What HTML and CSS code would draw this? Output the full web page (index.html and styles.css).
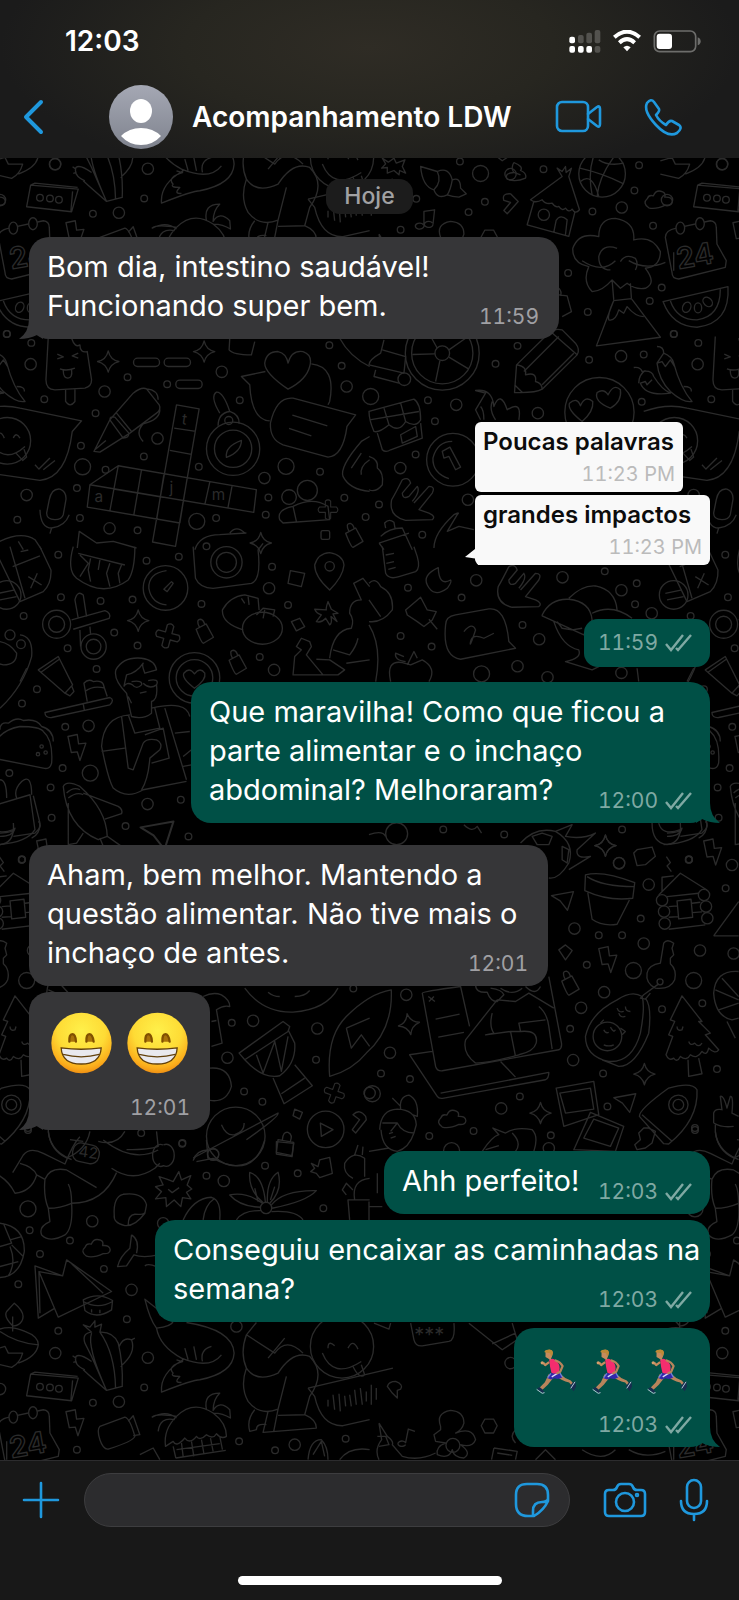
FILE: index.html
```
<!DOCTYPE html>
<html lang="pt-BR">
<head>
    <meta charset="UTF-8">
    <meta name="viewport" content="width=device-width, initial-scale=1.0">
    <title>Acompanhamento LDW</title>
    <link rel="stylesheet" href="styles.css">
</head>
<body>
    <!-- shared icons -->
    <svg class="defs" aria-hidden="true">
        <defs>
            <radialGradient id="faceFill" cx="50%" cy="30%" r="72%">
                <stop offset="0" stop-color="#fff04a"/>
                <stop offset="0.55" stop-color="#fedb35"/>
                <stop offset="0.85" stop-color="#fbae1c"/>
                <stop offset="1" stop-color="#ee8b12"/>
            </radialGradient>
            <linearGradient id="avatarFill" x1="0" y1="0" x2="0" y2="1">
                <stop offset="0" stop-color="#a5a8b4"/>
                <stop offset="1" stop-color="#7f838e"/>
            </linearGradient>
        </defs>
        <symbol id="ticks" viewBox="0 0 27 18">
            <path d="M1 10l5 6L18 1M11 14l2 2L26 1" fill="none" stroke="currentColor" stroke-width="2.4"/>
        </symbol>
        <symbol id="grin" viewBox="0 0 186 186">
            <circle cx="93" cy="93" r="92" fill="url(#faceFill)"/>
            <path d="M56 89Q55 66 65 66T76 89M108 89Q107 66 117 66T130 89" fill="#a9720a" stroke="#815000" stroke-width="7" stroke-linecap="round"/>
            <path d="M31 108Q92 116 153 108Q150 157 92 157T31 108Z" fill="#e9e9ee" stroke="#62400c" stroke-width="4"/>
            <path d="M37 128Q92 143 147 128" fill="none" stroke="#62400c" stroke-width="4"/>
        </symbol>
        <symbol id="runner" viewBox="0 0 124 136">
            <path d="M38 78Q32 93 27 102L10 120L18 127L36 110Q47 96 54 88Z" fill="#b8845b"/>
            <path d="M61 84Q78 98 101 103L107 111L114 106L106 97Q88 91 78 80Z" fill="#b8845b"/>
            <path d="M46 75L72 73L80 88Q67 95 57 90L46 94L34 89Z" fill="#3328aa"/>
            <path d="M45 75L36 88M73 74L80 86" stroke="#6d83dc" stroke-width="4"/>
            <path d="M48 86L64 76" stroke="#d9d9f4" stroke-width="4"/>
            <path d="M40 34Q52 26 60 36Q72 44 72 60L70 74Q58 78 47 73L43 56Z" fill="#f52d6e"/>
            <path d="M40 41L28 50L22 43" fill="none" stroke="#c58b5d" stroke-width="7" stroke-linejoin="round"/>
            <circle cx="19" cy="43" r="5" fill="#d69d6b"/>
            <path d="M60 36Q74 40 81 53L74 70L65 75" fill="none" stroke="#b8845b" stroke-width="7" stroke-linecap="round" stroke-linejoin="round"/>
            <path d="M29 8Q39 0 48 6Q54 15 48 25L44 35L37 30L29 25Z" fill="#c58b5d"/>
            <path d="M26 11Q25 3 36 3Q50 0 52 10Q52 18 46 24L43 14Z" fill="#bd8a37"/>
            <path d="M3 121L11 117L19 124L26 133L19 134Z" fill="#182d50"/>
            <path d="M103 115L112 103L120 100L122 115L115 130Z" fill="#182d50"/>
            <path d="M2 124L19 136L26 134M106 121L119 101" fill="none" stroke="#b5cbd5" stroke-width="3"/>
        </symbol>
    </svg>

    <div class="phone">
        <header class="top">
            <div class="status">
                <span class="clock">12:03</span>
                <svg class="signal" width="32" height="23" viewBox="0 0 96 69" aria-label="Sinal">
                    <g fill="#fff">
                        <rect x="1" y="20" width="17" height="20" rx="6"/>
                        <rect x="1" y="48" width="17" height="20" rx="6"/>
                        <rect x="27" y="48" width="17" height="20" rx="6"/>
                        <rect x="52" y="48" width="17" height="20" rx="6"/>
                    </g>
                    <g fill="#53524e">
                        <rect x="27" y="15" width="17" height="25" rx="6"/>
                        <rect x="52" y="8" width="17" height="32" rx="6"/>
                        <rect x="77" y="0" width="17" height="40" rx="6"/>
                        <rect x="77" y="48" width="17" height="20" rx="6"/>
                    </g>
                </svg>
                <svg class="wifi" width="28" height="22" viewBox="0 0 84 66" aria-label="Wi-Fi">
                    <path d="M4 22Q42-12 80 22M19 38Q42 17 65 38" fill="none" stroke="#fff" stroke-width="12"/>
                    <path d="M31 52Q42 42 53 52L42 64Z" fill="#fff"/>
                </svg>
                <svg class="battery" width="48" height="23" viewBox="0 0 144 69" aria-label="Bateria">
                    <rect x="4" y="3" width="124" height="62" rx="16" fill="none" stroke="#6d6d6b" stroke-width="5"/>
                    <rect x="11" y="11" width="46" height="46" rx="9" fill="#fff"/>
                    <path d="M134 22Q143 25 143 34T134 46Z" fill="#6d6d6b"/>
                </svg>
            </div>
            <div class="bar">
                <button class="icon back" type="button" aria-label="Voltar">
                    <svg width="22" height="36" viewBox="0 0 22 36"><path d="M19 3L4 18L19 33" stroke-width="4"/></svg>
                </button>
                <svg class="avatar" width="64" height="64" viewBox="0 0 64 64" aria-hidden="true">
                    <circle cx="32" cy="32" r="32" fill="url(#avatarFill)"/>
                    <ellipse cx="32" cy="26" rx="11" ry="12" fill="#fff"/>
                    <path d="M12 51Q20 43 32 43T52 51Q44 60 32 60T12 51Z" fill="#fff"/>
                </svg>
                <h1>Acompanhamento LDW</h1>
                <button class="icon video" type="button" aria-label="Chamada de vídeo">
                    <svg width="46" height="32" viewBox="0 0 46 32"><rect x="1" y="1" width="31" height="29" rx="5"/><path d="M32 13L41 6Q44 4 44 8V23Q44 27 41 25L32 18"/></svg>
                </button>
                <button class="icon call" type="button" aria-label="Ligar">
                    <svg width="38" height="38" viewBox="0 0 38 38"><path d="M3 5Q7 0 10 4L15 11Q16 13 12 17Q15 23 22 27Q25 22 28 23L35 27Q39 30 33 35Q24 40 12 27Q-1 13 3 5Z"/></svg>
                </button>
            </div>
        </header>

        <main class="chat">
            <svg class="wallpaper" aria-hidden="true">
                <defs>
                    <marker id="s" markerUnits="userSpaceOnUse" markerWidth="30" markerHeight="30" refX="15" refY="15"><circle cx="15" cy="15" r="10"/></marker>
                    <marker id="m" markerUnits="userSpaceOnUse" markerWidth="44" markerHeight="44" refX="22" refY="22"><circle cx="22" cy="22" r="17"/></marker>
                    <marker id="l" markerUnits="userSpaceOnUse" markerWidth="56" markerHeight="56" refX="28" refY="28"><circle cx="28" cy="28" r="24"/></marker>
                    <path id="spark" d="M0-32Q6-5 32 0Q6 6 0 32Q-6 6-32 0Q-6-5 0-32Z"/>
                    <path id="bolt" d="M-28-32L0-38L4-10L26-12L8 40L0 14L-18 16Z"/>
                    <path id="cloud" d="M-30 24Q-50 10-34-4Q-30-16-16-12Q-8-32 12-24Q22-20 18-8Q40-10 41 5Q40 18 20 16Q-10 30-30 24Z"/>
                    <path id="cross" d="M-10-10V-32Q0-42 10-32V-10H32Q42 0 32 10H10V32Q0 42-10 32V10H-32Q-42 0-32-10Z"/>
                    <path id="tag" d="M-24-14L6-30L28 10L-2 28Q-8 28-24-14ZM-14-20Q-26-44-10-44Q-2-42 2-28"/>
                    <path id="hand" d="M-30-60Q-50-20-62 0Q-72 50-20 62L60 60Q72 50 50 40L20 30L60-20Q70-40 50-40L5 10M-30-60Q-10-70-5-50L-30-20Q-30 0-10-10L15-40Q25-25 0 5"/>
                    <path id="paper" d="M-32-8L34-20L16 36L-6 8Z"/>

                    <!-- drawn in thirds of a pixel, one group per part of the wallpaper -->
                    <g id="tile">
                        <g transform="translate(369 0) scale(.333)">
                            <path d="M40 475L58 487L75 475L82 490L108 480L100 500L110 520L92 512L90 525L75 512L55 520L55 503L38 505L50 492Z"/>
                            <path d="M155 500L205 515Q240 500 250 540Q275 530 275 565L292 582L270 592Q250 590 235 585Q205 600 195 570Q160 560 155 500ZM205 515Q220 545 195 570M250 540Q245 570 235 585"/>
                            <path d="M165 680L165 635L197 630L192 675M165 680a13 9 0 1 1-2-6M192 675a13 9 0 1 1-2-6"/>
                            <path d="M405 602Q398 580 425 582L448 605L415 642L405 632L425 608Z"/>
                            <path d="M435 488Q465 500 455 512Q475 520 470 535Q440 548 415 538Q405 520 435 518L455 525M435 518Q425 505 435 488"/>
                            <path d="M485 600L580 530L565 505L580 515L590 500L592 518L608 505L600 530L632 630Q620 645 610 628Q600 640 590 625Q580 635 570 620Q560 625 550 610Q530 615 520 600Q500 612 485 600ZM495 605L475 675L600 710L618 638M555 697L562 662Q575 642 595 660L590 705"/>
                            <circle cx="700" cy="522" r="70"/>
                            <path d="M633 505Q700 520 765 552M680 456Q655 510 670 585M740 465Q690 530 685 590M635 545Q670 515 690 590M690 480Q720 500 765 490"/>
                            <use href="#cloud" x="870" y="600"/>
                            <polyline class="s" points="273,485 524,508 142,597 348,606 299,637 95,690 797,572 811,496 671,635 853,678"/>
                            <polyline class="m" points="759,623 525,645 1060,493"/>
                            <polyline class="l" points="335,521"/>
                        </g>
                        <g transform="translate(0 220) scale(.333)">
                            <use href="#spark" x="325" y="425"/><use href="#spark" x="613" y="395"/><use href="#spark" x="783" y="970"/>
                            <rect x="401" y="415" width="78" height="25" rx="12"/><rect x="493" y="415" width="79" height="25" rx="12"/><rect x="528" y="481" width="79" height="25" rx="12"/>
                            <path d="M145 350L138 480Q138 510 165 510L255 505Q275 500 275 480L262 395Q240 400 240 375Q225 385 215 355M197 508L197 545Q210 565 225 545L225 508M172 403L190 411L172 417M235 400L217 408L235 415M180 447Q200 455 225 445M190 452Q190 475 204 475T215 450"/>
                            <path d="M282 695L330 600L400 520Q425 500 440 507L478 555Q485 570 470 580L390 640L300 697ZM330 600Q330 588 345 592L387 640Q388 655 370 655ZM350 580L395 635M285 690L318 662M440 507Q475 510 475 540M480 570Q480 600 430 612Q405 640 430 665"/>
                            <path d="M530 555L598 567L527 980L458 967ZM523 625L588 635M510 692L575 704M270 795L762 878L770 810L355 738ZM355 738L330 873M425 750L402 885M492 765L470 902M562 775L540 910M630 787L615 855M697 798L684 867M270 795L262 862L540 910M342 808L490 833"/>
                            <text x="544" y="612" transform="rotate(8 540 612)">t</text><text x="509" y="820">j</text><text x="284" y="848">a</text><text x="636" y="842">m</text>
                            <circle cx="700" cy="687" r="80"/><circle cx="700" cy="687" r="56"/><circle cx="687" cy="602" r="12"/>
                            <path d="M680 713Q675 680 725 662Q725 695 680 713ZM655 618Q655 580 690 575Q720 585 718 612M660 580Q630 530 650 517Q670 515 690 575"/>
                            <path d="M865 508Q795 460 795 430Q800 395 835 395Q860 400 865 430Q875 390 910 395Q940 405 930 440Q920 480 865 508ZM935 432Q1010 440 990 545L985 555M797 455L725 470L750 495Q755 600 810 603"/>
                            <path d="M880 535L1068 585L1042 620Q1030 710 985 712L850 675Q810 660 812 610Q830 530 880 535ZM878 586L983 618M868 626L935 648"/>
                            <path d="M-70 575Q0 550 60 565L245 603L217 635Q200 775 120 782L-100 750M105 735L117 748L150 715M130 750L165 722"/>
                            <circle cx="22" cy="663" r="70"/>
                            <path d="M-10 655Q0 625 13 655M40 655Q48 635 60 655M-20 680Q20 730 75 680M48 700L68 722L80 712L72 688"/>
                            <path d="M148 840Q155 805 180 808Q200 815 198 840L190 885Q185 900 165 900Q140 900 140 880ZM120 870Q122 925 155 925Q195 920 208 885M155 925L150 942"/>
                            <circle cx="923" cy="812" r="30"/><circle cx="868" cy="832" r="22"/>
                            <path d="M840 900Q830 870 880 860Q940 830 985 860L990 900L850 910ZM880 860L890 905"/>
                            <use href="#cross" transform="translate(985 870) scale(.8)"/><use href="#tag" x="1062" y="955"/>
                            <path d="M1110 650L1085 665Q1020 740 1030 770Q1050 810 1110 815M1055 745L1085 700M1110 720Q1080 740 1085 765"/>
                            <rect x="964" y="933" width="26" height="26" rx="5"/>
                            <path d="M690 355L688 390Q700 405 755 405L765 365M1020 355Q1050 410 1110 440"/>
                            <path d="M232 985L238 935L290 970L340 965L410 985M-20 975Q60 930 105 960L125 990M55 965L70 990M585 990Q600 945 660 945L740 940M690 940Q710 915 735 940"/>
                            <polyline class="s" points="20,342 94,369 383,472 502,493 133,538 287,580 243,678 317,750 432,710 720,541 597,741 231,805 240,895 413,932 52,900 989,376 1026,438 961,756 806,833 798,885 649,895 1034,834 1098,892 620,980"/>
                            <polyline class="m" points="92,433 314,515 473,656 666,456 1041,500 794,775 80,826 329,926"/>
                            <polyline class="l" points="248,741 859,740 591,905"/>
                        </g>
                        <g transform="translate(369 220) scale(.333)">
                            <path d="M730 180Q700 215 670 215Q640 185 660 140Q610 130 612 85Q630 35 690 50Q690-5 740-5Q800 5 795 60Q850 45 875 95Q875 140 830 145Q865 190 830 205Q800 210 775 190L755 205ZM735 240L730 180M788 235L785 190M745 85Q700 70 690 110Q690 150 725 150M755 125Q770 100 800 115Q810 130 800 150"/>
                            <path d="M735 242L788 236L875 352L683 378ZM735 242Q715 285 720 300Q740 305 750 270L765 280L775 260Q800 290 825 290"/>
                            <path d="M883 245L1078 200Q1085 310 985 322Q910 320 883 245ZM905 243Q925 300 985 300Q1055 290 1055 208"/>
                            <ellipse cx="954" cy="262" rx="12" ry="16" transform="rotate(25 954 262)"/><ellipse cx="988" cy="264" rx="11" ry="15"/><ellipse cx="1017" cy="246" rx="12" ry="16" transform="rotate(-45 1017 246)"/>
                            <path d="M570 225L595 228L608 275L580 290M570 205Q580 215 575 228"/>
                            <path d="M437 518L443 435L545 335Q560 325 580 330L620 370Q635 390 625 405L520 508Q500 520 437 518ZM445 435Q475 440 470 465Q505 455 500 485Q520 490 520 508M465 455L570 350M520 495L615 400M545 335L625 405M437 495L460 517"/>
                            <circle cx="220" cy="400" r="111"/><circle cx="220" cy="400" r="92"/><circle cx="220" cy="400" r="22"/>
                            <path d="M198 402L130 404M240 390L290 355M240 412L300 448M213 422L200 485M205 385L180 340"/>
                            <path d="M45 360L35 400Q0 420 0 435L105 460L110 410L40 390M20 450L15 470L90 490"/><circle cx="106" cy="478" r="19"/>
                            <path d="M335 600L320 570L350 520L320 512Q370 505 375 560Q395 510 415 570Q460 540 450 600M345 600Q345 570 335 560M370 545Q360 570 380 600"/>
                            <circle cx="692" cy="577" r="104"/>
                            <path d="M640 605Q595 570 602 550Q625 530 635 558Q650 525 672 545Q675 575 640 605ZM725 565Q675 545 685 518Q705 505 718 525Q735 490 755 510Q760 545 725 565Z"/>
                            <path d="M865 380Q885 380 885 400Q910 410 915 430Q935 505 970 545Q945 550 905 515Q870 480 865 430Q875 415 885 400M865 430L880 425L890 440L905 420L918 440M795 443Q815 440 820 455Q850 450 855 470Q880 510 905 520Q830 530 815 490L830 485L835 495L850 480M810 490Q810 465 830 452M945 500Q970 500 968 515"/>
                            <circle cx="252" cy="720" r="79"/><path d="M240 777Q190 760 192 715Q205 665 250 665M220 695L243 682L275 742L260 750L240 710L225 715Z"/>
                            <path d="M0 575L135 538Q155 550 155 600Q140 625 110 605Q90 640 60 615Q30 640 15 635Q0 600 0 575ZM45 565L60 615M95 550L110 605M2 600L150 575M25 640L40 690Q50 700 65 690L160 655L155 610M95 645L140 620L145 650L100 670Z"/>
                            <use href="#hand" x="130" y="840"/>
                            <path d="M30 970L120 940M35 950Q60 925 100 925L130 990M50 925L47 910Q60 895 75 908L78 925M30 970L45 990M315 930L270 920L235 935L265 885Q275 875 255 885Q195 940 195 985"/>
                            <path d="M0 710Q30 720 25 745Q45 760 40 795Q20 820 0 810"/>
                            <polyline class="s" points="598,159 879,203 843,243 657,276 916,342 446,378 380,432 661,420 825,404 177,541 198,604 819,546 140,704 30,854 160,945 330,655"/>
                            <polyline class="m" points="757,409 262,555 507,580 94,745 297,840"/>
                            <polyline class="l" points="5,530"/>
                        </g>
                        <g transform="translate(0 550) scale(.333)">
                            <path d="M120-10L153 60Q155 100 130 125L60 155L-20-10M38 50L120 18M30-10L75 145M85 80L125 105M112 70L92 115M62 5L85 0"/><circle cx="20" cy="135" r="43"/><path d="M-5 130L45 120M0 150L50 140"/>
                            <path d="M220-10Q200 60 230 85Q310 145 385 90Q405 60 405-10M235 10L375 45M240 15L265 40L240 80M272 25L265 60L272 95M330 40L320 70L330 110M365 45L355 70L360 100M300 30L295 60"/>
                            <circle cx="497" cy="114" r="67"/><path d="M500 62Q445 70 447 115Q455 160 500 165M492 118L515 95L520 100L502 125Z"/>
                            <path d="M580-10L587 85Q600 115 640 115L755 100Q785 90 775 0L790-20"/><circle cx="680" cy="37" r="47"/><circle cx="680" cy="37" r="30"/>
                            <circle cx="170" cy="223" r="42"/><circle cx="170" cy="223" r="24"/><circle cx="281" cy="290" r="38"/><circle cx="281" cy="290" r="22"/>
                            <path d="M215 210L315 182Q335 190 328 205L220 238M235 205L225 150Q232 120 250 135L260 200M240 240L242 290M270 230L272 252"/>
                            <path d="M60 255Q100 260 95 320Q70 410 0 475M0 275Q30 280 50 310Q50 345 10 345L-10 340"/><circle cx="63" cy="283" r="13"/><circle cx="30" cy="255" r="15"/>
                            <path d="M115 360L175 320L218 405L195 430ZM122 368L178 328M195 430L210 438L222 425L215 408"/>
                            <path d="M262 455L252 400Q265 385 280 395Q310 390 312 410L322 440M255 425Q280 405 315 415M135 488L330 443Q345 450 330 465L155 503Q135 505 135 488ZM250 462L253 480"/>
                            <path d="M380 430Q340 390 348 360Q370 320 425 325Q465 330 470 360L435 370Q425 345 430 340Q410 370 380 375L372 410M372 410Q380 395 398 405Q410 420 425 405Q430 390 395 395M430 400Q450 420 470 405Q480 385 445 392M380 430Q390 480 395 500Q430 510 455 490L455 455Q475 450 470 405M395 460L385 440M420 430L440 425M390 495Q310 500 305 590Q325 690 340 715Q380 750 430 720L560 695M455 475Q560 450 570 500M365 500L385 655L400 660L430 580M385 495L405 550L480 535L465 475M495 475L560 690M305 605L375 595M435 555L490 535L508 625L455 640M430 580Q440 565 470 570Q490 580 480 600L450 625Q445 690 425 720M525 550L570 545M550 620L575 600M550 650L575 645"/>
                            <circle cx="584" cy="384" r="76"/><circle cx="584" cy="384" r="55"/><path d="M584 415Q545 385 552 370Q570 350 584 372Q600 350 615 370Q620 390 584 415Z"/>
                            <use href="#spark" x="415" y="212"/><use href="#cross" transform="translate(504 258) rotate(15)"/><use href="#tag" x="613" y="252"/><use href="#tag" x="712" y="345"/>
                            <path d="M730 240Q665 220 668 180Q690 140 735 135L775 145L778 180M725 145L735 160M745 140L748 165"/><ellipse cx="788" cy="235" rx="60" ry="48"/><path d="M770 195L790 175L825 180L820 200M790 205L795 180"/>
                            <path d="M990 120Q945 80 945 45Q955 10 990 8Q1030 15 1033 45Q1030 80 990 120Z"/><circle cx="990" cy="49" r="14"/>
                            <path d="M872 62L915 70L905 110L865 100ZM875 215L900 205L915 230L890 243Z"/>
                            <path d="M985 155Q978 175 980 180L945 178Q950 190 965 195L950 215Q965 220 978 205L990 225Q998 220 994 200L1012 215L1000 192L1015 190L995 178Z"/>
                            <path d="M880 375L885 320L905 300L890 290L905 265L930 275L935 290L920 315L970 375ZM950 328L990 330L1035 360L1015 375L970 375M990 325Q1000 240 1055 235Q1065 210 1050 190Q1050 150 1085 150L1062 100L1090 85L1110 110M1000 300L1050 315Q1070 290 1075 265M1040 340L1110 330"/>
                            <path d="M-20 590Q0 540 60 530Q120 530 130 545Q160 570 155 640Q150 660 130 655L-20 625M0 540Q0 515 25 520Q50 500 70 512Q110 505 125 530Q160 540 160 575"/>
                            <circle cx="125" cy="590" r="5"/><circle cx="114" cy="613" r="5"/><circle cx="137" cy="608" r="5"/>
                            <use href="#bolt" x="232" y="592"/>
                            <path d="M-10 765L90 735L105 840Q80 880-10 885M100 738L120 820Q120 855 95 865M50 745Q40 720 65 695Q95 670 95 735M0 690Q20 690 20 745M0 860Q40 860 45 835Q40 850 0 850"/>
                            <path d="M190 710Q200 690 240 710Q320 780 322 860L295 870Q200 830 190 710ZM200 730Q220 710 240 720M205 745Q230 725 250 735M250 730L355 770Q370 780 365 792L315 808M205 760L205 885L230 880L250 850M300 865L310 890M320 858L365 890"/>
                            <use href="#paper" transform="translate(470 845) scale(1.5)"/>
                            <polyline class="s" points="175,14 440,32 537,20 817,50 183,142 302,153 398,149 605,162 71,198 343,248 865,165 203,295 413,287 780,321 290,357 111,418 66,461 196,531 188,655 28,670 152,713 155,804 543,750 377,829 566,860 66,929"/>
                            <polyline class="m" points="808,115 823,360 266,528 443,763"/>
                            <polyline class="l" points="271,670"/>
                        </g>
                        <g transform="translate(369 550) scale(.333)">
                            <path d="M40-10L50 70Q60 90 90 80L140 65Q155 55 145 20L135-10M50 15L75 10M52 40L75 35M58 58L80 52"/>
                            <path d="M208 53Q160 75 175 105Q195 145 235 115Q250 95 245 90Q210 110 208 53Z"/>
                            <use href="#hand" x="450" y="110"/>
                            <path d="M520 195Q545 145 600 148Q665 155 670 210L645 255L520 198ZM555 215Q580 290 630 300Q640 325 590 335L670 360L690 350M600 145Q640 105 680 108Q740 120 745 180M670 190Q730 160 790 205M565 215L580 235L610 240L640 235"/>
                            <path d="M110 180L155 142L175 180L202 185L190 210L165 230L145 215L115 195ZM180 208L205 238M230 225Q220 320 275 328L440 295L420 275Q410 170 360 177L260 195Q230 200 230 225ZM285 245Q310 215 320 240Q300 300 305 275Q310 250 345 265L375 250"/>
                            <path d="M65 395Q50 330 100 338L125 345L160 330Q205 355 180 395M115 345L135 305L145 325M110 335Q75 330 80 310L105 320"/>
                            <path d="M0 100Q20 80 35 110Q75 130 70 180Q40 220 0 215M0 150L35 200M0 225Q40 290 20 395M805 355L810 395M975 355L955 395"/>
                            <path d="M455 880Q500 830 560 845Q620 880 600 940Q570 990 540 985M490 860L520 850L550 860L540 885L505 885ZM580 890L600 900L595 940L580 930ZM560 845L610 825L590 860Q640 870 680 850L625 900Q620 930 665 920L600 960"/>
                            <use href="#spark" x="710" y="888"/>
                            <path d="M795 910L805 900L850 892L860 920L830 945L805 948Z"/>
                            <circle cx="83" cy="852" r="33"/><path d="M0 855Q40 840 50 860M285 825Q310 850 325 830L338 850"/>
                            <path d="M850 820Q850 880 895 885Q940 880 935 820M870 820Q880 860 935 840M935 860L1000 850Q1025 830 1010 815"/>
                            <polyline class="s" points="708,64 804,100 799,163 117,113 278,143 461,225 95,258 188,290 223,839 406,854 760,839"/>
                            <polyline class="m" points="581,82 758,121 849,190 511,268 446,349 536,382 758,369 322,91 751,940"/>
                            <polyline class="l" points="338,372"/>
                        </g>
                        <g transform="translate(0 830) scale(.333)">
                            <path d="M610 500Q640 485 665 495Q690 510 690 530Q670 525 650 540L667 640L635 650M635 575L650 572"/>
                            <path d="M718 670L850 575L870 590L865 605L735 690ZM735 690Q790 750 840 738Q890 700 885 640L865 600M770 675L790 730L825 635L845 725L865 620M820 745L853 822L938 768L885 705M845 792L915 745"/>
                            <path d="M630 715Q690 710 695 770Q680 820 630 812M735 475Q790 550 880 547Q980 540 1015 475M805 487Q820 500 840 500M885 500Q915 500 930 482"/>
                            <path d="M990 740Q980 620 1040 560Q1110 490 1175 480Q1180 600 1100 670Q1060 720 990 740ZM1040 595L1110 565M1040 595L1055 655L1085 615L1110 650"/>
                            <circle cx="708" cy="920" r="88"/><path d="M665 885Q680 920 705 915Q735 905 733 880M580 985L835 850Q840 860 740 930"/><circle cx="640" cy="973" r="17"/>
                            <circle cx="978" cy="899" r="55"/><path d="M962 880L1000 900L965 920Z"/>
                            <use href="#cross" transform="translate(1004 790) rotate(20) scale(.85)"/>
                            <path d="M835 930L882 938L877 978L830 968ZM848 930Q850 905 865 908Q880 915 872 935M885 838L908 848L900 868L880 858ZM1060 855Q1080 835 1098 860L1100 870L1068 910L1058 900L1080 870Z"/>
                            <path d="M145 905Q150 960 200 985Q260 960 270 905M210 930L250 935M295 935Q350 950 375 905M380 960Q450 960 475 950L470 905"/>
                            <polyline class="s" points="696,579 949,690 733,785 788,816 1061,476 424,910 548,940 84,895 66,89"/>
                            <polyline class="m" points="760,573 953,596 683,684 1110,790"/>
                        </g>
                        <g transform="translate(369 830) scale(.333)">
                            <path d="M650 135Q700 120 798 158L792 205Q720 215 648 182ZM655 140Q700 170 798 170M657 188L670 268Q700 290 745 283L782 210"/>
                            <circle cx="880" cy="211" r="17"/><circle cx="886" cy="245" r="17"/><circle cx="888" cy="281" r="17"/><circle cx="1006" cy="195" r="17"/><circle cx="1012" cy="230" r="17"/><circle cx="1016" cy="265" r="17"/>
                            <path d="M870 195L935 130L1015 180M880 185L880 142L915 138M895 200L990 190M925 213L967 208L972 262L930 267ZM900 230L925 228M900 262L930 260M970 220L995 217M970 248L1000 246M900 298L1010 285M893 80L905 98L895 108L908 125M1035 318L1110 215M1035 318H1110"/>
                            <use href="#spark" x="710" y="47"/><use href="#bolt" x="1033" y="65"/><use href="#bolt" x="718" y="388"/><use href="#paper" x="580" y="205"/><use href="#spark" transform="translate(120 583) rotate(-10)"/><use href="#spark" x="827" y="733"/><use href="#spark" x="515" y="850"/>
                            <path d="M570 360L590 345L610 362L590 390Z"/>
                            <use href="#tag" x="603" y="468"/>
                            <path d="M885 340Q895 325 915 340L910 355L915 375L905 385L905 402Q925 420 918 450Q905 480 860 475Q830 460 835 430Q840 405 875 400Z"/><circle cx="874" cy="456" r="9"/><path d="M870 462L825 495L815 505L830 508L845 490"/>
                            <path d="M745 510Q790 480 820 500Q830 530 815 610Q790 700 720 695Q650 680 650 620Q665 550 745 510ZM830 505Q850 530 840 610Q800 710 750 710L700 690M745 535Q750 550 765 545M770 530Q770 545 785 545M750 550Q755 565 770 560"/><circle cx="716" cy="620" r="43"/><path d="M705 600Q710 612 720 608M725 592Q735 610 740 600M705 645Q720 652 735 645M695 580L705 570M755 595L770 605L760 615"/>
                            <path d="M940 498L905 570L918 575L900 615L912 620L892 675Q900 695 915 685Q925 700 935 680Q955 695 965 675Q985 690 1000 665Q1015 680 1020 655Q1040 675 1050 660L1010 615L1025 610L990 575L1000 575ZM958 690L960 740L1000 732L990 685M925 590Q925 605 940 600L943 590M960 635Q965 650 978 640Q990 655 1000 640"/>
                            <path d="M1110 425Q1040 420 1035 490Q1040 560 1090 570L1110 565M1040 480L1110 510M1050 540L1110 520M1060 445L1110 500M1075 575L1100 625"/>
                            <path d="M160 490L200 710Q205 725 220 723L570 660Q580 655 578 640L540 440M160 490Q160 485 275 470L302 590M178 500L198 515M195 500L180 515M200 568L272 553M208 622L285 608M190 665L122 675L205 800Q210 808 225 805L530 750Q540 745 540 728L215 790M395 695L440 742"/>
                            <path d="M320 700Q280 670 290 630L385 510L440 515L480 490L555 535M370 550Q360 590 375 610L350 615L425 605L440 680M425 605L455 605L450 580L530 570M455 605Q510 600 502 640Q495 665 450 675M320 700Q360 700 450 675M510 530Q535 550 540 590L550 658M320 465Q320 490 355 487Q365 515 385 515L405 495Q400 480 365 475M395 475Q430 500 460 475M470 470Q500 500 515 470"/>
                            <path d="M562 775L675 755L690 855L585 890ZM573 790L665 775L675 838L590 850ZM665 848L765 890L740 965L615 960ZM675 868L750 895L725 950L645 925Z"/>
                            <path d="M812 860Q810 840 900 775Q970 755 985 780Q990 870 900 943L885 942ZM820 855L910 935M825 895L810 910L815 930L798 945L805 960L830 955L850 940L860 905L840 895Z"/><circle cx="929" cy="825" r="29"/><circle cx="929" cy="825" r="16"/>
                            <use href="#cloud" x="250" y="868"/><use href="#paper" x="767" y="812"/>
                            <path d="M40 880L85 880Q100 910 135 910L142 885Q140 840 85 838Q35 840 32 900M85 880L65 905M36 900Q40 960 85 965Q120 955 135 910M95 838Q90 800 120 796Q150 810 145 860L130 855M70 805L95 830M60 912L72 908M65 925L80 920M0 965L60 955"/>
                            <path d="M340 965Q370 920 390 915L372 895L410 910Q440 890 490 900Q510 920 495 965M350 960L390 948M430 910Q460 940 440 965"/>
                            <path d="M1035 880L1035 850Q1040 835 1060 840L1055 800Q1065 795 1075 835L1085 800Q1095 798 1090 850L1110 860M1035 880Q1060 895 1095 890M1040 885Q1035 960 1110 990"/>
                            <polyline class="s" points="960,89 1071,175 816,266 690,316 760,316 654,405 604,597 880,538 1001,520 1045,718 703,731 36,731 123,748 716,830 453,800 181,919 314,904 546,917 979,901"/>
                            <polyline class="m" points="751,100 840,164 617,296 825,341 994,362 706,487 637,534 112,495 63,669 613,691 397,836 1095,371 1090,105"/>
                            <polyline class="l" points="794,422 975,452 248,963 10,792"/>
                        </g>
                        <g transform="translate(0 1140) scale(.333)">
                            <path d="M-30 95Q20 110 45 160Q95 155 110 105L135 118M38 98L70 45Q90 20 130 40L195 72Q220 10 240-10M135 118Q150 80 200 90L290 143M135 118Q130 170 145 205Q180 205 215 190Q215 150 205 132M145 205L150 245Q115 260 125 285Q150 310 195 285Q220 265 215 190Q310 190 350 98M335 85Q400 130 465 85L480 70M310 0Q400 70 475 30M490 15a24 33 0 1 0 1 62a24 33 0 1 0 0-62M60 70Q100 80 110 105"/>
                            <rect x="218" y="12" width="80" height="56" rx="24" transform="rotate(12 258 40)"/><text x="236" y="52" transform="rotate(8 258 40)">42</text>
                            <path d="M520 125L537 95L545 120L573 107L562 135L576 147L560 157L573 177L548 173L543 200L523 180L500 200L498 173L467 177L485 155L467 140L490 135L478 110L503 118ZM505 148L517 158L538 143"/>
                            <path d="M370 163Q430 155 440 195L435 220Q405 260 375 257Q340 250 343 225Q340 170 370 163ZM385 255Q385 225 405 223Q430 225 435 218"/>
                            <path d="M550 240Q580 175 635 172Q665 180 660 240M610 240Q615 195 645 175"/>
                            <circle cx="799" cy="204" r="17"/><path d="M790 188Q745 150 750 97Q790 110 797 187M803 187Q800 120 835 97Q850 150 810 190M815 195Q850 150 950 152Q920 185 817 205M783 202Q720 200 690 165Q740 155 788 190M785 212Q730 210 710 240M815 215Q890 210 910 240M775 185L765 145M812 180L825 140"/>
                            <path d="M620 0L625 60M580 62Q590 30 625 30M590 65L640 55Q760 120 795 0M830 5L882 10L877 50L830 42Z"/><circle cx="640" cy="44" r="17"/>
                            <path d="M935 70L955 80L960 60L990 52L998 100L960 113L950 100L933 95L945 85ZM1050 240L1045 180L1110 180M1065 180Q1055 120 1110 115M1060 115Q1030 100 1035 70Q1060 30 1095 55L1095 110M1060 150L1040 130L1028 150L1040 165M1075 15L1065 45M1090 20L1088 45"/>
                            <use href="#cloud" x="290" y="325"/>
                            <path d="M395 285L390 325Q360 350 353 380L380 378L402 345Q430 355 475 345M395 285Q420 300 410 340M435 378Q445 370 470 380"/>
                            <path d="M-90 330Q-80 250 0 250Q75 260 73 335Q60 410 0 413M10 250L35 310L0 320M35 315L70 350M30 320Q50 370 25 408M0 380L55 365M30 300L65 290"/>
                            <path d="M188 408L105 378L115 535L165 505M117 395L188 408L200 360L335 455L175 532ZM215 372L310 460M117 395L120 520"/>
                            <path d="M250 480Q295 455 338 482L335 510Q290 540 255 512ZM250 485Q295 510 338 485M275 508V518M300 510V520"/>
                            <path d="M38 558Q10 530 20 515L43 490Q80 520 65 545Q55 560 38 558ZM38 530V575M-60 610Q0 540 75 575Q115 590 115 615Q110 650 55 670M-20 630L15 620L25 640L68 640Q60 670 35 683L-20 670M0 575Q50 610 115 615M25 600V600"/>
                            <path d="M255 610Q245 580 275 577L250 555L270 562L285 543L285 562L305 553L300 577Q340 575 355 610Q370 670 367 740L320 752L275 650ZM275 580Q260 620 320 752M300 577Q345 640 347 745M255 690Q220 675 228 650Q240 640 275 665M320 752Q260 700 250 690M358 620Q370 590 395 600Q410 640 362 680M395 600L405 595M228 655L218 648M230 665L220 668"/>
                            <path d="M435 478L475 510L480 525L520 545Q515 560 470 565Q450 540 435 478ZM470 565Q480 620 545 655L550 660Q480 700 485 757Q580 720 600 720Q700 700 703 640Q700 570 560 548M545 655Q630 690 665 645M530 660L545 665M550 665Q500 680 520 700Q510 710 540 710Q520 730 545 728M555 625L565 660M582 620L590 660M635 620Q600 630 608 665"/>
                            <path d="M92 703L235 715L215 783L80 768ZM92 703L105 697L233 710M218 722L213 780"/>
                            <path d="M28 832L130 810Q148 812 148 830L150 880L178 930L175 950L35 985Q15 985 15 965L-5 860Q-5 838 28 832Z"/><text class="big" x="25" y="945" transform="rotate(-10 90 900)">24</text>
                            <ellipse class="pad" cx="40" cy="832" rx="13" ry="18"/><ellipse class="pad" cx="99" cy="819" rx="13" ry="18"/>
                            <use href="#bolt" x="226" y="848"/>
                            <path d="M300 860L375 832Q390 835 405 890Q400 905 325 928Q310 930 300 900Q290 870 300 860ZM385 845L400 828L420 885L400 888"/>
                            <path d="M497 920Q490 870 530 830Q580 780 640 820Q680 850 680 890Q665 900 650 882Q640 900 620 885Q600 905 590 890Q570 915 555 895Q530 925 520 905ZM520 920L528 955M545 910L550 950M575 905L582 950M605 900L612 940M632 895L640 935M660 890L668 930M528 955L678 932M530 930L660 912M530 835Q500 810 457 832Q470 820 530 830M525 840Q480 830 475 875M620 810Q610 760 660 760Q640 780 640 812Q660 780 690 810L692 835Q670 820 640 820"/>
                            <path d="M740 585L825 640Q860 590 910 640M740 585L770 548M855 595L805 655M740 585Q720 640 740 685Q720 740 745 785Q780 830 835 808L860 710M740 685Q770 730 835 700Q880 630 930 650Q980 700 930 770L915 825Q950 840 950 865L790 878L805 815M835 827L915 825M835 808L822 875M765 810Q740 840 750 875L770 870Q770 850 800 855"/>
                            <circle cx="1027" cy="620" r="95"/><path d="M985 625Q985 600 1005 618M1045 625Q1060 595 1075 628M968 640Q1000 720 1085 665M1060 680Q1080 720 1095 705L1085 675M925 745L1180 685M925 745L945 770Q965 860 1030 858L1110 840M985 780V800M1000 765L1005 810M1018 762L1022 815M1035 768L1038 800M1050 765L1055 800M1065 750L1070 795M1082 745L1088 795M1100 755V785M1115 735V795M1130 745V780"/>
                            <path d="M420 945L460 925L480 960M925 960Q930 900 965 900Q985 920 985 960M1020 960Q1050 920 1110 930M940 945L965 905L975 950"/>
                            <polyline class="s" points="547,11 620,107 796,77 894,100 971,205 89,271 210,302 120,342 312,387 55,433 381,538 175,573 433,743 279,789 231,930 718,905 826,932 1038,897 120,741 150,743 177,747"/>
                            <polyline class="m" points="277,244 395,450 166,640 444,654 357,786 710,560 672,123 490,250 885,915 0,748"/>
                            <polyline class="l" points="84,207"/>
                        </g>
                        <g transform="translate(369 1140) scale(.333)">
                            <path d="M125 550L135 600Q140 620 160 618L240 605Q260 600 255 550M300 550L400 630L445 600L430 550M370 612L440 580M15 550L60 568L65 550"/>
                            <text class="stars" x="136" y="606">***</text>
                            <path d="M55 740Q60 725 80 725Q105 735 95 748L85 752L85 775L70 760Z"/>
                            <path d="M110 915a12 8 0 1 1 0-6L118 868L138 875M30 850L55 890Q75 905 70 915L100 950Q150 965 200 940M30 850L38 900Q15 930 30 960M25 890L50 890L60 915L30 920"/>
                            <path d="M215 860Q200 820 245 812Q285 815 285 850Q280 870 260 880Q310 860 320 900Q310 925 275 915Q310 940 285 955Q255 955 250 930Q240 960 205 945Q200 920 230 910L200 905L195 885L215 870Z"/><circle cx="252" cy="917" r="21"/>
                            <path d="M337 858L348 838H374L385 858L374 880H348ZM375 925L445 935L440 960M375 925L368 960M385 940L430 947M500 960L530 930L560 960M915 905V960"/>
                            <path d="M640 930Q700 970 740 930M780 930Q830 960 890 935M440 870Q420 890 440 910"/>
                            <path d="M0 200H40M0 185V240M25 100V160"/>
                            <polyline class="m" points="425,670 540,25"/>
                        </g>
                    </g>
                </defs>
                <g transform="translate(0 -158)">
                    <use href="#tile"/>
                    <use href="#tile" x="667"/>
                    <use href="#tile" x="-667"/>
                    <use href="#tile" y="-1189"/>
                    <use href="#tile" x="667" y="-1189"/>
                </g>
            </svg>

            <span class="day">Hoje</span>

            <article class="bubble in tail w-long">
                <p>Bom dia, intestino saudável!<br>Funcionando super bem.</p>
                <div class="meta"><time>11:59</time></div>
            </article>

            <div class="sticker">
                <div class="note"><b>Poucas palavras</b><time>11:23 PM</time></div>
                <div class="note last"><b>grandes impactos</b><time>11:23 PM</time></div>
            </div>
            <div class="bubble out stamp">
                <div class="meta"><time>11:59</time><svg class="ticks"><use href="#ticks"/></svg></div>
            </div>

            <article class="bubble out tail w-reply">
                <p>Que maravilha! Como que ficou a<br>parte alimentar e o inchaço<br>abdominal? Melhoraram?</p>
                <div class="meta"><time>12:00</time><svg class="ticks"><use href="#ticks"/></svg></div>
            </article>

            <article class="bubble in first w-reply">
                <p>Aham, bem melhor. Mantendo a<br>questão alimentar. Não tive mais o<br>inchaço de antes.</p>
                <div class="meta"><time>12:01</time></div>
            </article>
            <article class="bubble in tail emoji">
                <div class="faces" role="img" aria-label="Dois rostos sorrindo">
                    <svg width="62" height="62"><use href="#grin"/></svg>
                    <svg width="62" height="62"><use href="#grin"/></svg>
                </div>
                <div class="meta"><time>12:01</time></div>
            </article>

            <article class="bubble out first w-short">
                <p>Ahh perfeito!</p>
                <div class="meta"><time>12:03</time><svg class="ticks"><use href="#ticks"/></svg></div>
            </article>
            <article class="bubble out w-full">
                <p>Conseguiu encaixar as caminhadas na<br>semana?</p>
                <div class="meta"><time>12:03</time><svg class="ticks"><use href="#ticks"/></svg></div>
            </article>
            <article class="bubble out tail run">
                <div class="runners" role="img" aria-label="Três corredores">
                    <svg width="41" height="46"><use href="#runner"/></svg>
                    <svg width="41" height="46"><use href="#runner"/></svg>
                    <svg width="41" height="46"><use href="#runner"/></svg>
                </div>
                <div class="meta"><time>12:03</time><svg class="ticks"><use href="#ticks"/></svg></div>
            </article>
        </main>

        <footer class="bottom">
            <form class="composer">
                <button class="icon" type="button" aria-label="Anexar">
                    <svg width="36" height="36" viewBox="0 0 36 36"><path d="M18 1V35M1 18H35"/></svg>
                </button>
                <div class="field">
                    <input type="text" aria-label="Mensagem">
                    <button class="icon" type="button" aria-label="Figurinhas">
                        <svg width="34" height="34" viewBox="0 0 34 34"><path d="M12 1H22Q33 1 33 12V18Q29 27 19 33H13Q1 33 1 21V12Q1 1 12 1ZM18 32V28Q18 19 27 19Q32 19 33 16"/></svg>
                    </button>
                </div>
                <button class="icon camera" type="button" aria-label="Câmera">
                    <svg width="42" height="34" viewBox="0 0 42 34"><path d="M5 7H9Q12 7 13 4Q14 1 17 1H25Q28 1 29 4Q30 7 33 7H37Q41 7 41 11V29Q41 33 37 33H5Q1 33 1 29V11Q1 7 5 7Z"/><circle cx="21" cy="19" r="9"/><circle cx="33" cy="12" r="1"/></svg>
                </button>
                <button class="icon mic" type="button" aria-label="Gravar áudio">
                    <svg width="28" height="42" viewBox="0 0 28 42"><rect x="7" y="1" width="14" height="28" rx="7"/><path d="M1 22Q1 35 14 35T27 22M14 35V41"/></svg>
                </button>
            </form>
            <div class="home"></div>
        </footer>
    </div>
</body>
</html>
```
FILE: styles.css
```
* {
    box-sizing: border-box;
}

body {
    margin: 0;
    background: #181818;
    color: #fff;
    font-family: Inter, "Liberation Sans", sans-serif;
}

.defs {
    position: absolute;
    width: 0;
    height: 0;
}

.phone {
    display: flex;
    flex-direction: column;
    min-height: 100vh;
}

/* top bar */
.top {
    padding: 23px 57px 9px 22px;
    background: radial-gradient(ellipse 50% 90% at 50% 30%, #2f2c25, #272620 50%, #1b1b1b);
}

.status {
    display: flex;
    align-items: center;
    height: 36px;
    margin-right: -19px;
    padding-left: 43px;
}

.clock {
    flex: 1;
    font-size: 28px;
    font-weight: 600;
}

.wifi {
    margin: 0 12px;
}

.bar {
    display: flex;
    align-items: center;
    height: 64px;
    margin-top: 26px;
}

.bar h1 {
    flex: 1;
    margin: 0 0 0 19px;
    font-size: 28px;
    font-weight: 600;
    white-space: nowrap;
}

.avatar {
    margin-left: 65px;
}

.icon {
    display: block;
    flex: none;
    padding: 0;
    border: none;
    background: none;
    cursor: pointer;
}

.icon svg {
    display: block;
    fill: none;
    stroke: #1f98dd;
    stroke-width: 2.6;
    stroke-linecap: round;
    stroke-linejoin: round;
    overflow: visible;
}

.call {
    margin-left: 42px;
}

/* messages */
.chat {
    position: relative;
    flex: 1;
    display: flex;
    flex-direction: column;
    align-items: flex-start;
    padding: 21px 29px 13px;
    background: #000;
    overflow: hidden;
}

.wallpaper {
    position: absolute;
    top: 0;
    left: 0;
    width: 100%;
    height: 100%;
    fill: none;
    stroke: #2b2b2b;
    stroke-width: 4;
    stroke-linejoin: round;
}

.wallpaper polyline {
    stroke: none;
}

.wallpaper marker {
    stroke: #2b2b2b;
    stroke-width: 4;
}

.wallpaper .s {
    marker: url(#s);
}

.wallpaper .m {
    marker: url(#m);
}

.wallpaper .l {
    marker: url(#l);
}

.wallpaper .pad {
    fill: #000;
}

.wallpaper text {
    font-family: Inter, sans-serif;
    font-size: 46px;
    fill: #2b2b2b;
    stroke: none;
}

.wallpaper .stars {
    font-size: 60px;
}

.wallpaper .big {
    font-size: 88px;
    font-weight: 600;
    fill: none;
    stroke: #2b2b2b;
}

.day {
    position: relative;
    align-self: center;
    padding: 0 18px;
    border-radius: 14px;
    background: #1c1c1c;
    color: #a1a1a3;
    font-size: 23px;
    font-weight: 500;
    line-height: 35px;
}

.bubble {
    position: relative;
    max-width: 90%;
    margin-top: 6px;
    padding: 10px 18px 14px;
    border-radius: 20px;
}

.bubble p {
    margin: 0;
    font-size: 29px;
    line-height: 39px;
    white-space: nowrap;
}

.in {
    background: #363638;
    color: #fff;
}

.out {
    align-self: flex-end;
    background: #005046;
    color: #fff;
}

.first {
    margin-top: 21px;
}

.meta {
    position: absolute;
    right: 18px;
    bottom: 9px;
    display: flex;
    align-items: center;
    gap: 7px;
    color: #a0a0a4;
    font-size: 21px;
    font-variant-numeric: tabular-nums;
    line-height: 26px;
}

.out .meta {
    color: #7fa9a3;
}

.in .meta {
    right: 20px;
}

.ticks {
    width: 27px;
    height: 18px;
}

.tail::after {
    content: "";
    position: absolute;
    bottom: 0;
    width: 24px;
    height: 26px;
    background: inherit;
}

.in.tail::after {
    left: -10px;
    clip-path: path("M10 0V6Q10 19 0 26Q10 26 18 22L24 26V0Z");
}

.out.tail::after {
    right: -10px;
    clip-path: path("M14 0V6Q14 19 24 26Q14 26 6 22L0 26V0Z");
}

.w-long {
    width: 530px;
    margin-top: 23px;
}

.w-reply {
    width: 519px;
    margin-top: 15px;
}

.w-reply.first {
    margin-top: 22px;
}

.w-short {
    width: 326px;
}

.w-full {
    width: 555px;
}

.stamp {
    width: 126px;
    height: 48px;
    margin-top: 54px;
    border-radius: 14px;
}

.stamp .meta {
    bottom: 11px;
}

.emoji {
    width: 181px;
    height: 138px;
}

.faces,
.runners {
    display: flex;
    gap: 15px;
    padding: 10px 4px;
}

.run {
    width: 196px;
    height: 119px;
}

/* quoted words */
.sticker {
    position: relative;
    align-self: flex-end;
    display: flex;
    flex-direction: column;
    align-items: flex-start;
    gap: 3px;
    width: 235px;
    margin-top: 83px;
}

.note {
    display: flex;
    flex-direction: column;
    width: 208px;
    height: 70px;
    padding: 4px 8px;
    border-radius: 6px;
    background: #f9f9f9;
    color: #0c0c0c;
    font-size: 24px;
    line-height: 32px;
}

.note b {
    font-weight: 600;
    white-space: nowrap;
}

.note time {
    align-self: flex-end;
    color: #bbb;
    font-size: 20px;
    font-variant-numeric: tabular-nums;
}

.note.last {
    position: relative;
    width: 100%;
}

.note.last::after {
    content: "";
    position: absolute;
    bottom: 0;
    left: -10px;
    width: 20px;
    height: 16px;
    background: inherit;
    clip-path: polygon(50% 0, 100% 0, 100% 100%, 65% 100%, 50% 60%, 0 50%);
}

/* composer */
.bottom {
    height: 140px;
    padding-top: 12px;
    border-top: 1px solid #2c2c2e;
    background: #181818;
}

.composer {
    display: flex;
    align-items: center;
    padding: 0 31px 0 23px;
}

.field {
    flex: 1;
    display: flex;
    align-items: center;
    min-width: 0;
    height: 54px;
    margin-left: 25px;
    padding: 0 20px 0 24px;
    border: 1px solid #3d3d3f;
    border-radius: 27px;
    background: #2c2c2e;
}

.field input {
    flex: 1;
    min-width: 0;
    border: none;
    outline: none;
    background: transparent;
    color: #fff;
    font: inherit;
    font-size: 28px;
}

.camera {
    margin: 0 34px;
}

.home {
    width: 264px;
    height: 9px;
    margin: 49px auto 0;
    border-radius: 5px;
    background: #fff;
}
```
